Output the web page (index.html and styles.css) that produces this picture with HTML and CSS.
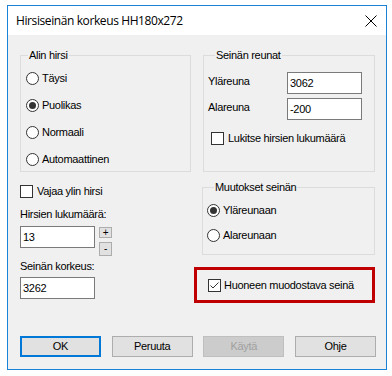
FILE: index.html
```html
<!DOCTYPE html>
<html lang="fi">
<head>
<meta charset="utf-8">
<title>Hirsiseinän korkeus</title>
<link rel="stylesheet" href="styles.css">
</head>
<body>
<div class="window">
  <div class="titlebar">
    <span class="title">Hirsiseinän korkeus HH180x272</span>
    <svg class="close" width="12" height="12" viewBox="0 0 12 12"><path d="M0.5 0.5 L11.5 11.5 M11.5 0.5 L0.5 11.5" stroke="#000" stroke-width="1" fill="none"/></svg>
  </div>
  <div class="content">
    <div class="columns">
      <div class="col col-left">
        <div class="group g-alin">
          <span class="group-title">Alin hirsi</span>
          <div class="radio-list">
            <div class="radio-row r1"><span class="radio"></span><span>Täysi</span></div>
            <div class="radio-row"><span class="radio checked"></span><span>Puolikas</span></div>
            <div class="radio-row"><span class="radio"></span><span>Normaali</span></div>
            <div class="radio-row"><span class="radio"></span><span>Automaattinen</span></div>
          </div>
        </div>
        <div class="check-row vajaa"><span class="checkbox"></span><span>Vajaa ylin hirsi</span></div>
        <div class="field-label fl1">Hirsien lukumäärä:</div>
        <div class="spin-row">
          <div class="input">13</div>
          <div class="spin-buttons">
            <span class="spin-btn plus">+</span>
            <span class="spin-btn minus">-</span>
          </div>
        </div>
        <div class="field-label fl2">Seinän korkeus:</div>
        <div class="input in2">3262</div>
      </div>
      <div class="col col-right">
        <div class="group g-reunat">
          <span class="group-title">Seinän reunat</span>
          <div class="edge-row er1"><span class="edge-label">Yläreuna</span><div class="input">3062</div></div>
          <div class="edge-row er2"><span class="edge-label">Alareuna</span><div class="input">-200</div></div>
          <div class="check-row lukitse"><span class="checkbox"></span><span>Lukitse hirsien lukumäärä</span></div>
        </div>
        <div class="group g-muutokset">
          <span class="group-title">Muutokset seinän</span>
          <div class="radio-row m1"><span class="radio checked"></span><span>Yläreunaan</span></div>
          <div class="radio-row m2"><span class="radio"></span><span>Alareunaan</span></div>
        </div>
        <div class="highlight">
          <div class="check-row"><span class="checkbox checked"><svg width="11" height="11" viewBox="0 0 11 11"><path d="M1.5 5.5 L4 8 L9.5 2.5" stroke="#333" stroke-width="1" fill="none"/></svg></span><span class="hl-text">Huoneen muodostava seinä</span></div>
        </div>
      </div>
    </div>
    <div class="buttons">
      <span class="btn default">OK</span>
      <span class="btn">Peruuta</span>
      <span class="btn disabled">Käytä</span>
      <span class="btn">Ohje</span>
    </div>
  </div>
</div>
</body>
</html>
```

FILE: styles.css
```css
* { box-sizing: border-box; }
html, body { margin: 0; padding: 0; background: #ffffff; }
body {
  font-family: "Liberation Sans", Arial, sans-serif;
  font-size: 11px;
  line-height: 13px;
  color: #000;
  letter-spacing: -0.3px;
}
.window {
  margin: 5px 0 0 7px;
  width: 380px;
  height: 365px;
  border: 1px solid #1883d7;
  background: #f0f0f0;
  display: flex;
  flex-direction: column;
}
.titlebar {
  height: 29px;
  flex: none;
  background: #ffffff;
  display: flex;
  align-items: center;
  justify-content: space-between;
  padding: 0 9px 0 8px;
}
.title {
  font-family: "Open Sans", "Noto Sans", sans-serif;
  font-size: 12px;
  letter-spacing: -0.4px;
}
.close { display: block; }
.content {
  flex: 1;
  display: flex;
  flex-direction: column;
  padding: 20px 10px 12px 12px;
}
.columns { display: flex; gap: 11px; }
.col { display: flex; flex-direction: column; }
.col-left { width: 171px; }
.col-right { width: 173px; }

.group { border: 1px solid #dcdcdc; }
.group-title {
  display: block;
  width: fit-content;
  margin: -7px 0 0 7px;
  padding: 0 1px;
  background: #f0f0f0;
}
.g-alin { height: 117px; }
.radio-list { display: flex; flex-direction: column; padding-left: 5px; }
.radio-row { display: flex; align-items: center; gap: 3px; height: 14px; margin-top: 13px; }
.radio-list .r1 { margin-top: 9px; }
.radio-list .radio-row + .radio-row { margin-top: 13px; }
.radio {
  width: 13px; height: 13px;
  border: 1px solid #333;
  border-radius: 50%;
  background: #fff;
  display: flex; align-items: center; justify-content: center;
  flex: none;
}
.radio.checked::after {
  content: "";
  width: 7px; height: 7px;
  border-radius: 50%;
  background: #333;
}
.check-row { display: flex; align-items: center; gap: 4px; height: 13px; }
.checkbox {
  width: 13px; height: 13px;
  border: 1px solid #333;
  background: #fff;
  flex: none;
  display: flex; align-items: center; justify-content: center;
}
.checkbox svg { display: block; }
.vajaa { margin-top: 13px; }
.field-label { height: 13px; }
.fl1 { margin-top: 10px; }
.fl2 { margin-top: 12px; }
.input {
  width: 75px; height: 22px;
  border: 1px solid #7a7a7a;
  background: #fff;
  padding-left: 2px;
  display: flex; align-items: center;
}
.spin-row { display: flex; align-items: flex-start; gap: 4px; margin-top: 5px; height: 22px; }
.in2 { margin-top: 4px; }
.spin-buttons { display: flex; flex-direction: column; gap: 4px; padding-top: 1px; }
.spin-btn {
  width: 13px;
  border: 1px solid #adadad;
  background: #e1e1e1;
  display: flex; align-items: center; justify-content: center;
  font-size: 10px;
  line-height: 10px;
}
.plus { height: 11px; }
.minus { height: 14px; }

.g-reunat { height: 117px; margin-left: 1px; padding-left: 4px; }
.edge-row { display: flex; align-items: flex-start; }
.edge-label { width: 79px; padding-top: 3px; }
.er1 { margin-top: 10px; }
.er2 { margin-top: 4px; }
.lukitse { margin-top: 12px; padding-left: 3px; }

.g-muutokset { height: 68px; margin-top: 15px; padding-left: 4px; }
.g-muutokset .m1 { margin-top: 9px; }
.g-muutokset .m2 { margin-top: 11px; }

.highlight {
  width: 181px; height: 36px;
  margin: 12px 0 0 -8px;
  border: 3px solid #c00000;
  display: flex; align-items: center;
  padding-left: 11px;
}
.highlight .check-row { gap: 3px; }

.buttons {
  margin-top: auto;
  display: flex;
  justify-content: space-between;
}
.btn {
  width: 81px; height: 21px;
  border: 1px solid #adadad;
  background: #e1e1e1;
  display: flex; align-items: center; justify-content: center;
}
.btn.default { border: 2px solid #0078d7; }
.btn.disabled { color: #a0a0a0; border-color: #bfbfbf; background: #cccccc; }
```
